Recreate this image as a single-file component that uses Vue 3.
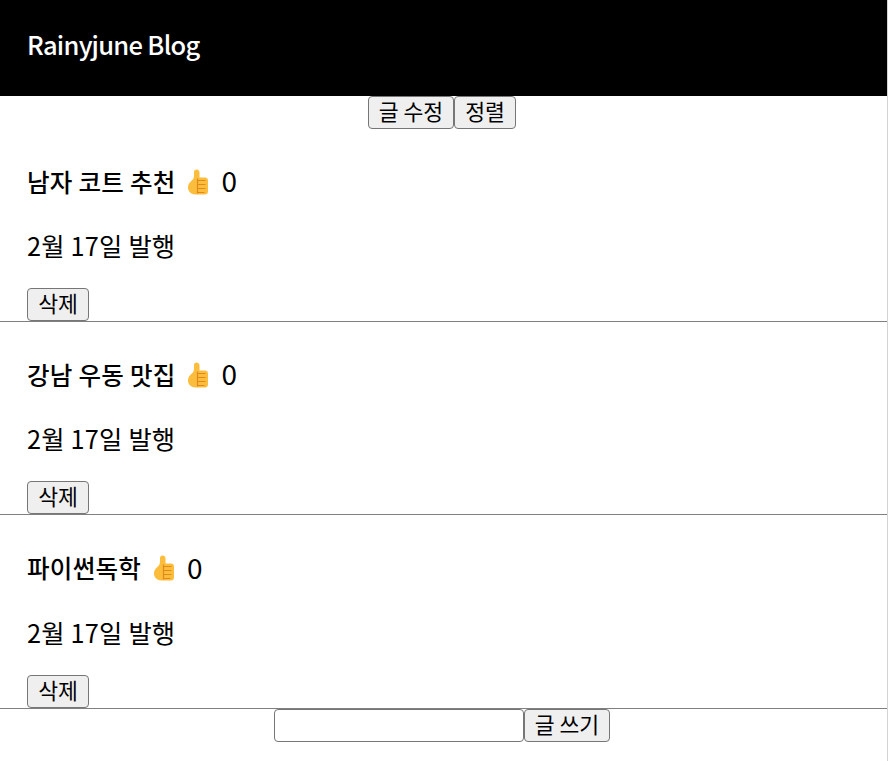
<script setup>
import { ref } from 'vue'

const posts = ref([
  { title: '남자 코트 추천', date: '2월 17일 발행', likes: 0 },
  { title: '강남 우동 맛집', date: '2월 17일 발행', likes: 0 },
  { title: '파이썬독학', date: '2월 17일 발행', likes: 0 }
])
</script>

<template>
  <div class="app">
    <div class="black-nav">
      <h4>Rainyjune Blog</h4>
    </div>

    <div class="toolbar">
      <button>글 수정</button>
      <button>정렬</button>
    </div>

    <div v-for="post in posts" :key="post.title" class="list">
      <h4 class="title">
        {{ post.title }}
        <span class="like">
          <svg class="thumb" viewBox="0 0 20 26" width="20" height="26">
            <path fill="#fcbc3c" d="M8.5 0.5c1.7 0 3 1.2 3 3v5h5.5c1.7 0 3 1.2 3 3v11c0 1.7-1.3 3-3 3H7.5C3.2 25.5 0 22.5 0 18.5c0-3.4 1.7-5.2 3.6-6.8C5.2 10.4 6 8.8 6 6.5V3c0-1.4 1-2.5 2.5-2.5z" />
            <path fill="none" stroke="#e08a1e" stroke-width="1.2" d="M9.5 9.5V24.5M9.5 11.5h8M9.5 15.5h8M9.5 19.5h8M9.5 23.5h7" />
          </svg>
          <span class="count">{{ post.likes }}</span>
        </span>
      </h4>
      <p>{{ post.date }}</p>
      <button class="remove">삭제</button>
      <hr />
    </div>

    <div class="write">
      <input type="text" />
      <button>글 쓰기</button>
    </div>
  </div>
</template>

<style>
body {
  margin: 0;
  background: #fff;
}
</style>

<style scoped>
.app {
  width: 887px;
  min-height: 100vh;
  border-right: 1px solid #d4d4d4;
  font-family: "Noto Sans CJK KR", "Noto Sans", sans-serif;
  font-size: 21.33px;
  color: #000;
  text-align: center;
}

.black-nav {
  display: flex;
  align-items: center;
  height: 88px;
  padding: 0 0 8px 27px;
  background: #000;
  color: #fff;
}

.black-nav h4 {
  margin: 0;
  font-size: 25.5px;
  font-weight: 500;
  letter-spacing: -0.7px;
  line-height: 32px;
}

button {
  height: 33px;
  padding: 0 0 3px;
  border: 1px solid #767676;
  border-radius: 4px;
  background: #efefef;
  color: #000;
  font-family: inherit;
  font-size: 21.6px;
  line-height: 1;
  vertical-align: top;
}

.toolbar {
  display: flex;
  justify-content: center;
  height: 32.67px;
  padding-right: 3px;
}

.toolbar button:first-child {
  width: 86px;
}

.toolbar button:last-child {
  width: 62px;
}

.list {
  padding-left: 27px;
  text-align: left;
}

.title {
  display: flex;
  align-items: center;
  height: 32px;
  margin: 36.93px 0 0;
  font-size: 24.5px;
  font-weight: 500;
  line-height: 32px;
  letter-spacing: 0.3px;
  white-space: pre;
}

.like {
  display: flex;
  align-items: center;
  margin-left: 7px;
  font-weight: 400;
}

.thumb {
  display: block;
}

.count {
  margin: -3px 0 0 13px;
  font-size: 28px;
}

p {
  height: 32px;
  margin: 31.4px 0 27px;
  font-size: 25.3px;
  line-height: 32px;
  letter-spacing: 0.2px;
}

.remove {
  display: block;
  width: 62px;
}

hr {
  height: 1px;
  margin: 0 0 0 -27px;
  border: 0;
  background: #808080;
}

.write {
  display: flex;
  justify-content: center;
  padding: 0.33px 3px 0 0;
}

input {
  box-sizing: border-box;
  width: 250px;
  height: 33px;
  padding: 0;
  border: 1px solid #767676;
  border-radius: 4px;
  background: #fff;
}

.write button {
  width: 86px;
}
</style>
